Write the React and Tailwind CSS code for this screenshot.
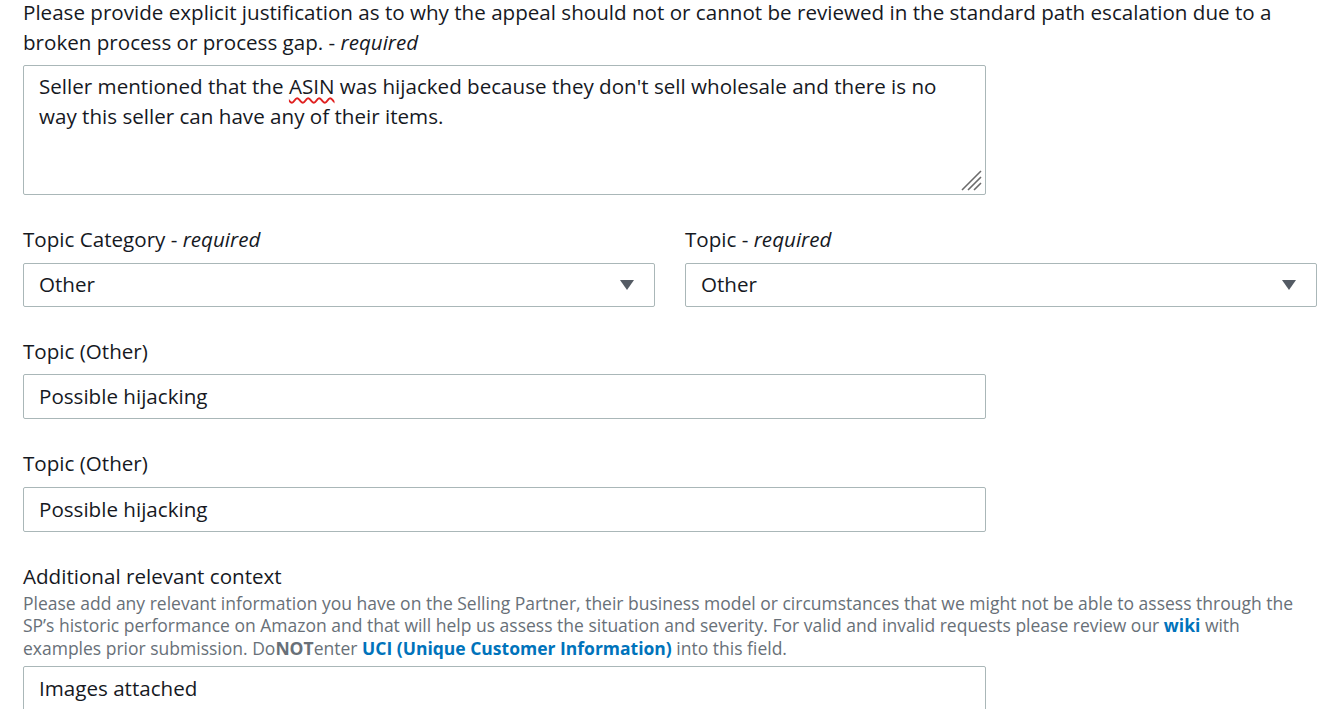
const Label = ({ children, required }) => (
  <div className="text-[20.6px] leading-[30px] text-[#16191f]">
    {children}
    {required && (
      <>
        {" - "}
        <i>required</i>
      </>
    )}
  </div>
);

const Caret = () => (
  <svg width="16" height="12" viewBox="0 0 16 12" className="shrink-0">
    <path d="M1 1h14L8 11z" fill="#545b64" />
  </svg>
);

const Select = ({ value }) => (
  <div className="flex h-[44px] items-center justify-between rounded-[2px] border border-[#aab7b8] bg-white pl-[15px] pr-[19px] text-[20.6px] text-[#16191f]">
    <span className="pb-[2px]">{value}</span>
    <Caret />
  </div>
);

const TextInput = ({ value }) => (
  <div className="flex h-[45px] w-[963px] items-center rounded-[2px] border border-[#aab7b8] bg-white px-[15px] text-[20.6px] text-[#16191f]">
    {value}
  </div>
);

const ResizeGrip = () => (
  <svg width="24" height="24" viewBox="0 0 24 24" className="absolute bottom-[2px] right-[2px]">
    <path d="M22 3L3 22M22 9L9 22M22 15L15 22" stroke="#6b6b6b" strokeWidth="1.6" />
  </svg>
);

export default function App() {
  return (
    <div className="min-h-screen bg-white pl-[23px] pr-[2px] font-['Open_Sans',sans-serif] text-[#16191f]">
      <p className="-mt-[3px] text-[20.6px] leading-[30px]">
        Please provide explicit justification as to why the appeal should not or cannot be reviewed in the standard path escalation due to a broken process or process gap. - <i>required</i>
      </p>
      <div className="relative mt-[8px] h-[130px] w-[963px] rounded-[2px] border border-[#aab7b8] bg-white px-[15px] pt-[5px] text-[20.6px] leading-[30px]">
        Seller mentioned that the{" "}
        <span className="underline decoration-[#e02020] decoration-wavy decoration-[1.5px] underline-offset-[3px]">ASIN</span>{" "}
        was hijacked because they don't sell wholesale and there is no way this seller can have any of their items.
        <ResizeGrip />
      </div>

      <div className="mt-[29px] grid grid-cols-2 gap-[30px]">
        <div>
          <Label required>Topic Category</Label>
          <div className="mt-[9px]">
            <Select value="Other" />
          </div>
        </div>
        <div>
          <Label required>Topic</Label>
          <div className="mt-[9px]">
            <Select value="Other" />
          </div>
        </div>
      </div>

      <div className="mt-[29px]">
        <Label>Topic (Other)</Label>
        <div className="mt-[8px]">
          <TextInput value="Possible hijacking" />
        </div>
      </div>

      <div className="mt-[29px]">
        <Label>Topic (Other)</Label>
        <div className="mt-[9px]">
          <TextInput value="Possible hijacking" />
        </div>
      </div>

      <div className="mt-[29px]">
        <Label>Additional relevant context</Label>
        <p className="mt-[1px] text-[17.5px] leading-[22.4px] text-[#687078]">
          Please add any relevant information you have on the Selling Partner, their business model or circumstances that we might not be able to assess through the SP’s historic performance on Amazon and that will help us assess the situation and severity. For valid and invalid requests please review our{" "}
          <a className="font-bold text-[#0073bb]">wiki</a> with examples prior submission. Do<b>NOT</b>enter{" "}
          <a className="font-bold text-[#0073bb]">UCI (Unique Customer Information)</a> into this field.
        </p>
        <div className="mt-[7px]">
          <TextInput value="Images attached" />
        </div>
      </div>
    </div>
  );
}
